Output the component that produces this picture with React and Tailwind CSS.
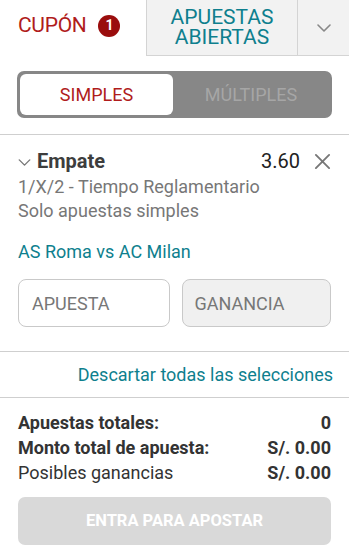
import React from 'react';

const ChevronDown = ({ className }) => (
  <svg viewBox="0 0 14 8" className={className} fill="none" stroke="currentColor" strokeWidth="1.6" strokeLinecap="round" strokeLinejoin="round">
    <path d="M1 1l6 6 6-6" />
  </svg>
);

const CloseIcon = ({ className }) => (
  <svg viewBox="0 0 18 18" className={className} fill="none" stroke="currentColor" strokeWidth="2" strokeLinecap="round">
    <path d="M2 2l14 14M16 2L2 16" />
  </svg>
);

export default function App() {
  return (
    <div className="w-[349px] h-[556px] bg-white overflow-hidden text-[#333]" style={{ fontFamily: 'Roboto, "Noto Sans", sans-serif' }}>
      {/* Tabs */}
      <div className="flex h-[56px]">
        <div className="w-[146px] flex items-center pl-[18px] pb-[5px] gap-[12px]">
          <span className="text-[21px] text-[#b01c1c] tracking-[-0.3px]">CUPÓN</span>
          <span className="w-[22px] h-[22px] rounded-full bg-[#9a0d0d] text-white text-[14px] font-bold flex items-center justify-center">1</span>
        </div>
        <div className="w-[151px] bg-[#f2f2f2] border-l border-b border-[#d4d4d4] flex flex-col items-center justify-center pb-[1px]">
          <span className="block text-[21px] leading-[20px] text-[#0e7f8e]">APUESTAS</span>
          <span className="block text-[21px] leading-[20px] text-[#0e7f8e]">ABIERTAS</span>
        </div>
        <div className="flex-1 bg-[#f2f2f2] border-l border-b border-[#d4d4d4] flex items-center justify-center">
          <ChevronDown className="w-[14px] h-[8px] text-[#888]" />
        </div>
      </div>

      {/* Segment */}
      <div className="px-[17px] pt-[15px] pb-[16px] border-b border-[#cfcfcf]">
        <div className="h-[47px] bg-[#878787] rounded-[7px] p-[3px] flex">
          <div className="w-[153px] bg-white rounded-[6px] flex items-center justify-center text-[18px] text-[#b01c1c]">SIMPLES</div>
          <div className="flex-1 flex items-center justify-center text-[18px] text-[#a6a6a6]">MÚLTIPLES</div>
        </div>
      </div>

      {/* Selection */}
      <div className="px-[18px] pt-[14px] pb-[24px] border-b border-[#cfcfcf]">
        <div className="flex items-center h-[24px]">
          <ChevronDown className="w-[13px] h-[7px] text-[#777] mr-[6px] mt-[2px]" />
          <span className="text-[20px] font-bold text-[#3d3d3d]">Empate</span>
          <span className="ml-auto text-[20px] text-[#222] mr-[14px]">3.60</span>
          <CloseIcon className="w-[17px] h-[17px] text-[#777]" />
        </div>
        <div className="text-[18px] leading-[24px] text-[#777] mt-[2px]">1/X/2 - Tiempo Reglamentario</div>
        <div className="text-[18px] leading-[24px] text-[#777]">Solo apuestas simples</div>
        <div className="text-[18px] leading-[24px] text-[#0e7f8e] mt-[17px]">AS Roma vs AC Milan</div>
        <div className="flex gap-[12px] mt-[15px]">
          <div className="flex-1 h-[48px] rounded-[8px] border border-[#c9c9c9] flex items-center px-[13px] text-[18px] text-[#777]">APUESTA</div>
          <div className="flex-1 h-[48px] rounded-[8px] border border-[#c9c9c9] bg-[#f0f0f0] flex items-center px-[12px] text-[18px] text-[#777]">GANANCIA</div>
        </div>
      </div>

      {/* Clear */}
      <div className="h-[46px] border-b border-[#cfcfcf] flex items-center justify-end px-[16px]">
        <span className="text-[18px] text-[#0e7f8e]">Descartar todas las selecciones</span>
      </div>

      {/* Totals */}
      <div className="px-[18px] pt-[12px]">
        <div className="flex justify-between text-[18px] leading-[25px] font-bold text-[#333]">
          <span>Apuestas totales:</span><span>0</span>
        </div>
        <div className="flex justify-between text-[18px] leading-[25px] font-bold text-[#333]">
          <span>Monto total de apuesta:</span><span>S/. 0.00</span>
        </div>
        <div className="flex justify-between text-[18px] leading-[25px] text-[#333]">
          <span>Posibles ganancias</span><span className="font-bold">S/. 0.00</span>
        </div>
        <div className="mt-[12px] h-[48px] rounded-[7px] bg-[#d9d9d9] flex items-center justify-center text-[16.5px] font-bold text-white">
          ENTRA PARA APOSTAR
        </div>
      </div>
    </div>
  );
}
